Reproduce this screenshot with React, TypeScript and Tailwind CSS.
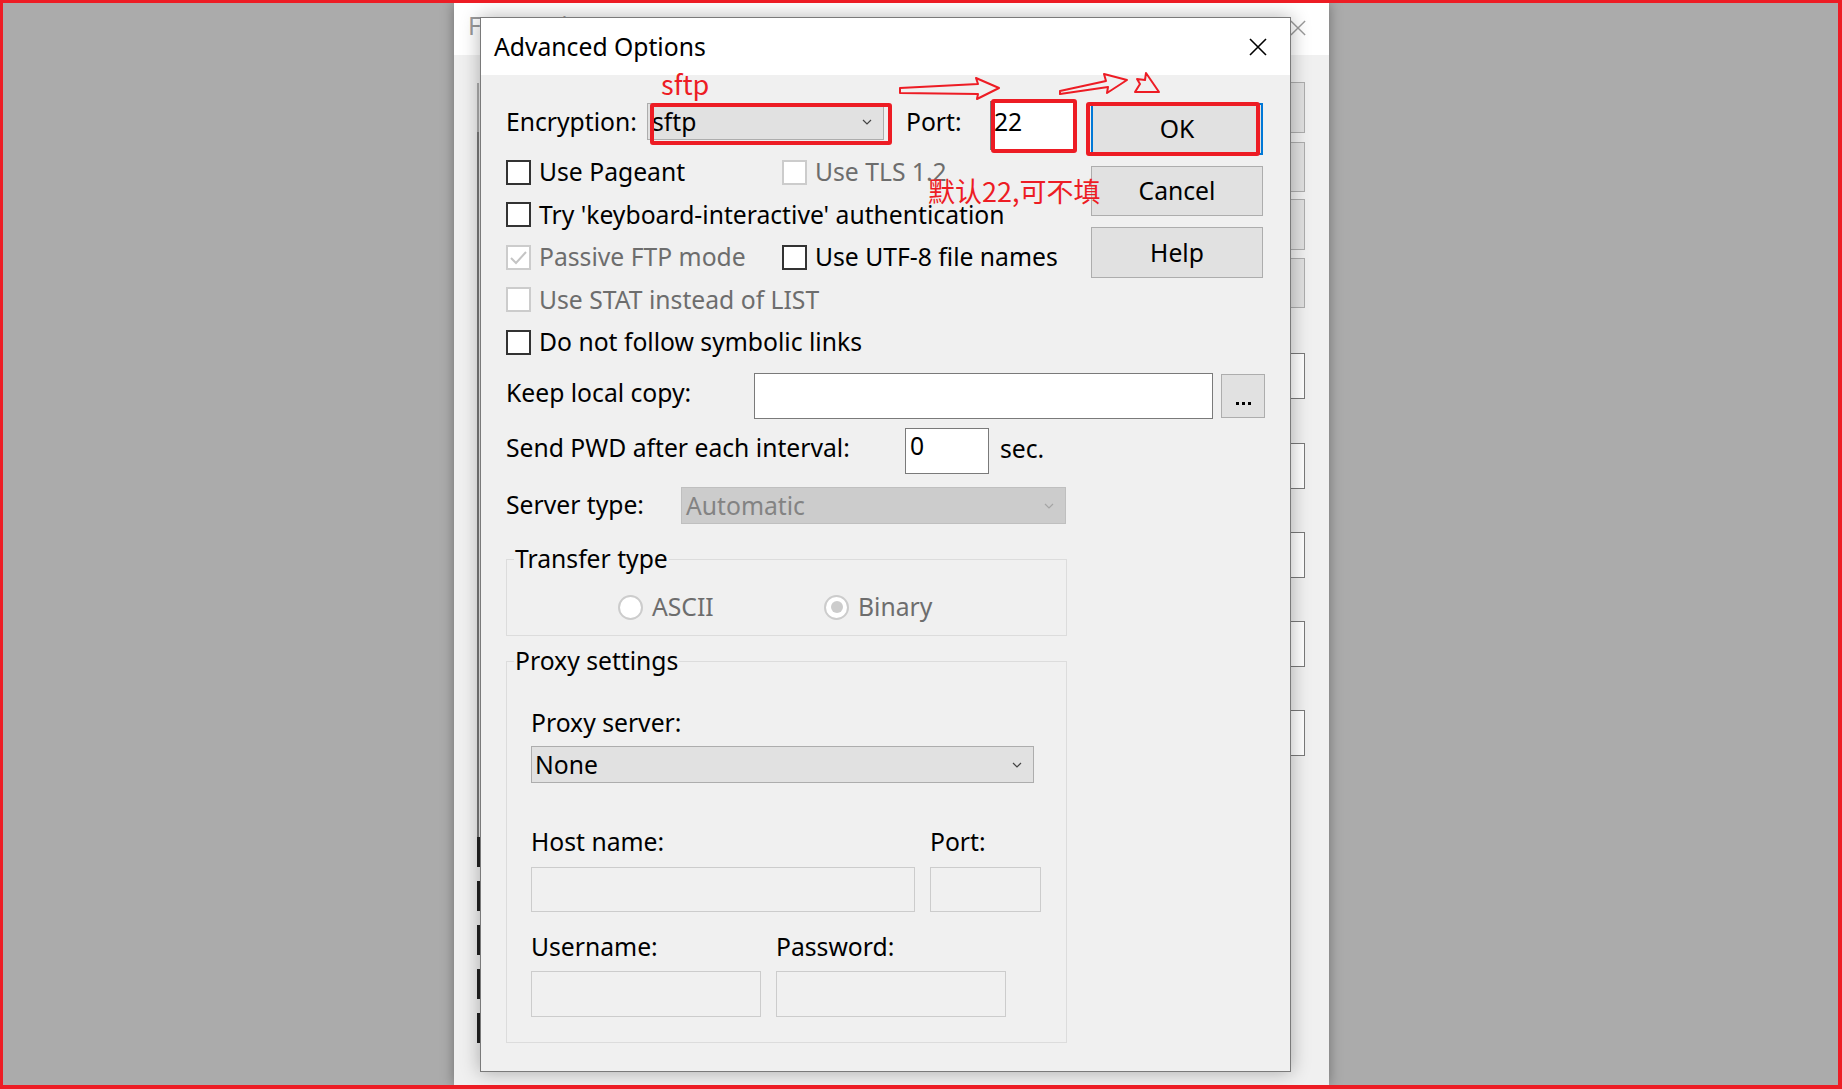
import React from "react"

const body = "font-['Noto_Sans',sans-serif] text-[24.7px] leading-[30px]"
const cjk = "font-['Noto_Sans_CJK_SC','Noto_Sans',sans-serif]"

function Chevron({ className }: { className?: string }) {
  return (
    <svg width="10" height="6" viewBox="0 0 10 6" className={className}>
      <polyline points="1,1 5,5 9,1" fill="none" stroke="currentColor" strokeWidth="1.2" />
    </svg>
  )
}

function CloseX({ size, className }: { size: number; className?: string }) {
  return (
    <svg width={size} height={size} viewBox="0 0 18 18" className={className}>
      <path d="M1 1 L17 17 M17 1 L1 17" stroke="currentColor" strokeWidth="1.6" fill="none" />
    </svg>
  )
}

function Check({ label, checked, disabled, className }: { label: string; checked?: boolean; disabled?: boolean; className?: string }) {
  return (
    <div className={`flex items-center gap-[8px] ${className ?? ""}`}>
      <span
        className={`flex h-[25px] w-[25px] shrink-0 items-center justify-center border-2 bg-white ${
          disabled ? "border-[#cccccc]" : "border-[#333333]"
        }`}
      >
        {checked && (
          <svg width="21" height="21" viewBox="0 0 21 21">
            <polyline points="3,11 8,16 18,5" fill="none" stroke="#c4c4c4" strokeWidth="2" />
          </svg>
        )}
      </span>
      <span className={`whitespace-nowrap ${disabled ? "text-[#6d6d6d]" : "text-black"}`}>{label}</span>
    </div>
  )
}

function Radio({ label, checked, className }: { label: string; checked?: boolean; className?: string }) {
  return (
    <div className={`flex items-center gap-[9px] ${className ?? ""}`}>
      <span className="flex h-[25px] w-[25px] items-center justify-center rounded-full border-2 border-[#cccccc] bg-white">
        {checked && <span className="h-[12px] w-[12px] rounded-full bg-[#cccccc]" />}
      </span>
      <span className="text-[#6d6d6d]">{label}</span>
    </div>
  )
}

export default function App() {
  return (
    <div className={`relative h-[1089px] w-[1842px] overflow-hidden border-[3px] border-r-[4px] border-b-[4px] border-[#ed1c24] bg-[#ababab] ${body}`}>
      {/* window behind the dialog */}
      <div className="absolute left-[451px] top-0 flex h-[1082px] w-[875px] flex-col bg-[#f0f0f0] shadow-[0_0_12px_rgba(0,0,0,0.35)]">
        <div className="flex h-[52px] items-start justify-between bg-white pl-[14px] pr-[23px] pt-[8px]">
          <span className="text-[#999999]">FTP Settings</span>
          <CloseX size={16} className="mt-[9px] text-[#9a9a9a]" />
        </div>
        <div className="flex flex-1 justify-between pl-[23px] pr-[24px]">
          <div className="flex w-[3px] flex-col">
            <div className="mt-[28px] h-[49px] w-[2px] bg-[#adadad]" />
            <div className="h-[705px] w-[2px] bg-[#7a7a7a]" />
            <div className="h-[30px] w-[3px] bg-[#222222]" />
            <div className="mt-[14px] h-[30px] w-[3px] bg-[#222222]" />
            <div className="mt-[14px] h-[30px] w-[3px] bg-[#222222]" />
            <div className="mt-[14px] h-[30px] w-[3px] bg-[#222222]" />
            <div className="mt-[14px] h-[30px] w-[3px] bg-[#222222]" />
          </div>
          <div className="flex w-[60px] flex-col">
            <div className="mt-[27px] h-[51px] border border-[#adadad] bg-[#e1e1e1]" />
            <div className="mt-[9px] h-[50px] border border-[#adadad] bg-[#e1e1e1]" />
            <div className="mt-[7px] h-[51px] border border-[#adadad] bg-[#e1e1e1]" />
            <div className="mt-[8px] h-[50px] border border-[#adadad] bg-[#e1e1e1]" />
            <div className="mt-[45px] h-[46px] border border-[#7a7a7a] bg-white" />
            <div className="mt-[44px] h-[46px] border border-[#7a7a7a] bg-white" />
            <div className="mt-[43px] h-[46px] border border-[#7a7a7a] bg-white" />
            <div className="mt-[43px] h-[46px] border border-[#7a7a7a] bg-white" />
            <div className="mt-[43px] h-[46px] border border-[#7a7a7a] bg-white" />
          </div>
        </div>
      </div>

      {/* Advanced Options dialog */}
      <div className="absolute left-[477px] top-[14px] flex h-[1055px] w-[811px] flex-col border border-[#7a7a7a] bg-[#f0f0f0] shadow-[0_0_18px_rgba(0,0,0,0.3)]">
        <div className="flex h-[57px] shrink-0 items-center justify-between bg-white pl-[13px] pr-[23px]">
          <span className="text-black">Advanced Options</span>
          <CloseX size={18} className="text-black" />
        </div>

        <div className="flex flex-col pl-[25px] pt-[28px]">
          <div className="flex">
            <div className="flex w-[571px] flex-col">
              <div className="flex h-[37px] items-center">
                <span className="w-[141px]">Encryption:</span>
                <div className="flex h-[37px] w-[237px] items-center justify-between border border-[#adadad] bg-[#e1e1e1] pl-[4px] pr-[11px]">
                  <span>sftp</span>
                  <Chevron className="text-[#444444]" />
                </div>
                <span className="ml-[22px] w-[84px]">Port:</span>
                <div className="-mt-[2px] h-[49px] w-[86px] self-start border border-[#7a7a7a] bg-white pl-[3px] pt-[5px]">22</div>
              </div>
              <div className="mt-[11px] flex h-[42.5px] items-center">
                <Check label="Use Pageant" className="w-[276px]" />
                <Check label="Use TLS 1.2" disabled />
              </div>
              <div className="flex h-[42.5px] items-center">
                <Check label="Try 'keyboard-interactive' authentication" />
              </div>
              <div className="flex h-[42.5px] items-center">
                <Check label="Passive FTP mode" checked disabled className="w-[276px]" />
                <Check label="Use UTF-8 file names" />
              </div>
              <div className="flex h-[42.5px] items-center">
                <Check label="Use STAT instead of LIST" disabled />
              </div>
              <div className="flex h-[42.5px] items-center">
                <Check label="Do not follow symbolic links" />
              </div>
            </div>

            <div className="ml-[14px] flex w-[172px] flex-col">
              <button className="flex h-[52px] items-center justify-center border-2 border-[#0078d7] bg-[#e1e1e1]">OK</button>
              <button className="mt-[11px] flex h-[50px] items-center justify-center border border-[#adadad] bg-[#e1e1e1]">Cancel</button>
              <button className="mt-[11px] flex h-[51px] items-center justify-center border border-[#adadad] bg-[#e1e1e1]">Help</button>
            </div>
          </div>

          <div className="mt-[9.5px] flex h-[46px] items-center">
            <span className="mb-[6px] w-[248px]">Keep local copy:</span>
            <div className="h-[46px] w-[459px] border border-[#7a7a7a] bg-white" />
            <button className="ml-[8px] flex h-[44px] w-[44px] items-end justify-center gap-[3px] border border-[#adadad] bg-[#e1e1e1] pb-[12px]">
              <span className="h-[3px] w-[3px] bg-black" />
              <span className="h-[3px] w-[3px] bg-black" />
              <span className="h-[3px] w-[3px] bg-black" />
            </button>
          </div>

          <div className="mt-[9px] flex h-[46px] items-center">
            <span className="mb-[6px] w-[399px]">Send PWD after each interval:</span>
            <div className="h-[46px] w-[84px] border border-[#7a7a7a] bg-white pl-[4px] pt-[2px]">0</div>
            <span className="mb-[4px] ml-[11px]">sec.</span>
          </div>

          <div className="mt-[13px] flex h-[37px] items-center">
            <span className="mb-[2px] w-[175px]">Server type:</span>
            <div className="flex h-[37px] w-[385px] items-center justify-between border border-[#bfbfbf] bg-[#cccccc] pl-[4px] pr-[11px]">
              <span className="text-[#838383]">Automatic</span>
              <Chevron className="text-[#a5a5a5]" />
            </div>
          </div>

          <div className="relative mt-[35px] h-[77px] w-[561px] border border-[#dcdcdc]">
            <span className="absolute -top-[16px] left-[7px] bg-[#f0f0f0] px-[1px]">Transfer type</span>
            <div className="mt-[32px] flex h-[30px] items-center pl-[111px]">
              <Radio label="ASCII" className="w-[206px]" />
              <Radio label="Binary" checked />
            </div>
          </div>

          <div className="relative mt-[25px] flex h-[382px] w-[561px] flex-col border border-[#dcdcdc] pl-[24px] pt-[46px]">
            <span className="absolute -top-[16px] left-[7px] bg-[#f0f0f0] px-[1px]">Proxy settings</span>
            <span className="h-[30px]">Proxy server:</span>
            <div className="mt-[8px] flex h-[37px] w-[503px] items-center justify-between border border-[#adadad] bg-[#e1e1e1] pl-[3px] pr-[11px]">
              <span>None</span>
              <Chevron className="text-[#444444]" />
            </div>
            <div className="mt-[44px] flex h-[30px]">
              <span className="w-[399px]">Host name:</span>
              <span>Port:</span>
            </div>
            <div className="mt-[10px] flex gap-[15px]">
              <div className="h-[45px] w-[384px] border border-[#cccccc] bg-[#f0f0f0]" />
              <div className="h-[45px] w-[111px] border border-[#cccccc] bg-[#f0f0f0]" />
            </div>
            <div className="mt-[20px] flex h-[30px]">
              <span className="w-[245px]">Username:</span>
              <span>Password:</span>
            </div>
            <div className="mt-[9px] flex gap-[15px]">
              <div className="h-[46px] w-[230px] border border-[#cccccc] bg-[#f0f0f0]" />
              <div className="h-[46px] w-[230px] border border-[#cccccc] bg-[#f0f0f0]" />
            </div>
          </div>
        </div>
      </div>

      {/* red annotations */}
      <span className={`absolute left-[658px] top-[66px] text-[27px] leading-[30px] text-[#ed1c24] ${cjk}`}>sftp</span>
      <div className="absolute left-[647px] top-[100px] h-[42px] w-[242px] rounded-[3px] border-4 border-[#ed1c24]" />
      <div className="absolute left-[988px] top-[96px] h-[54px] w-[86px] rounded-[3px] border-4 border-[#ed1c24]" />
      <div className="absolute left-[1083px] top-[99px] h-[54px] w-[174px] rounded-[3px] border-4 border-[#ed1c24]" />
      <svg className="absolute left-[892px] top-[67px]" width="272" height="33" viewBox="895 70 272 33">
        <polygon
          points="900,88 978,84 976,78 999,88 977,99 978,94 900,93"
          fill="none"
          stroke="#ed1c24"
          strokeWidth="2"
          strokeLinejoin="round"
        />
        <polygon
          points="1060,91 1106,81 1104,74 1127,80 1107,93 1108,87 1060,94"
          fill="none"
          stroke="#ed1c24"
          strokeWidth="2"
          strokeLinejoin="round"
        />
        <polygon
          points="1146,73 1159,92 1135,92 1140,84 1137,79 1145,80"
          fill="none"
          stroke="#ed1c24"
          strokeWidth="2"
          strokeLinejoin="round"
        />
      </svg>
      <span className={`absolute left-[925px] top-[173px] whitespace-nowrap text-[27px] leading-[30px] text-[#ed1c24] ${cjk}`}>默认22,可不填</span>
    </div>
  )
}
